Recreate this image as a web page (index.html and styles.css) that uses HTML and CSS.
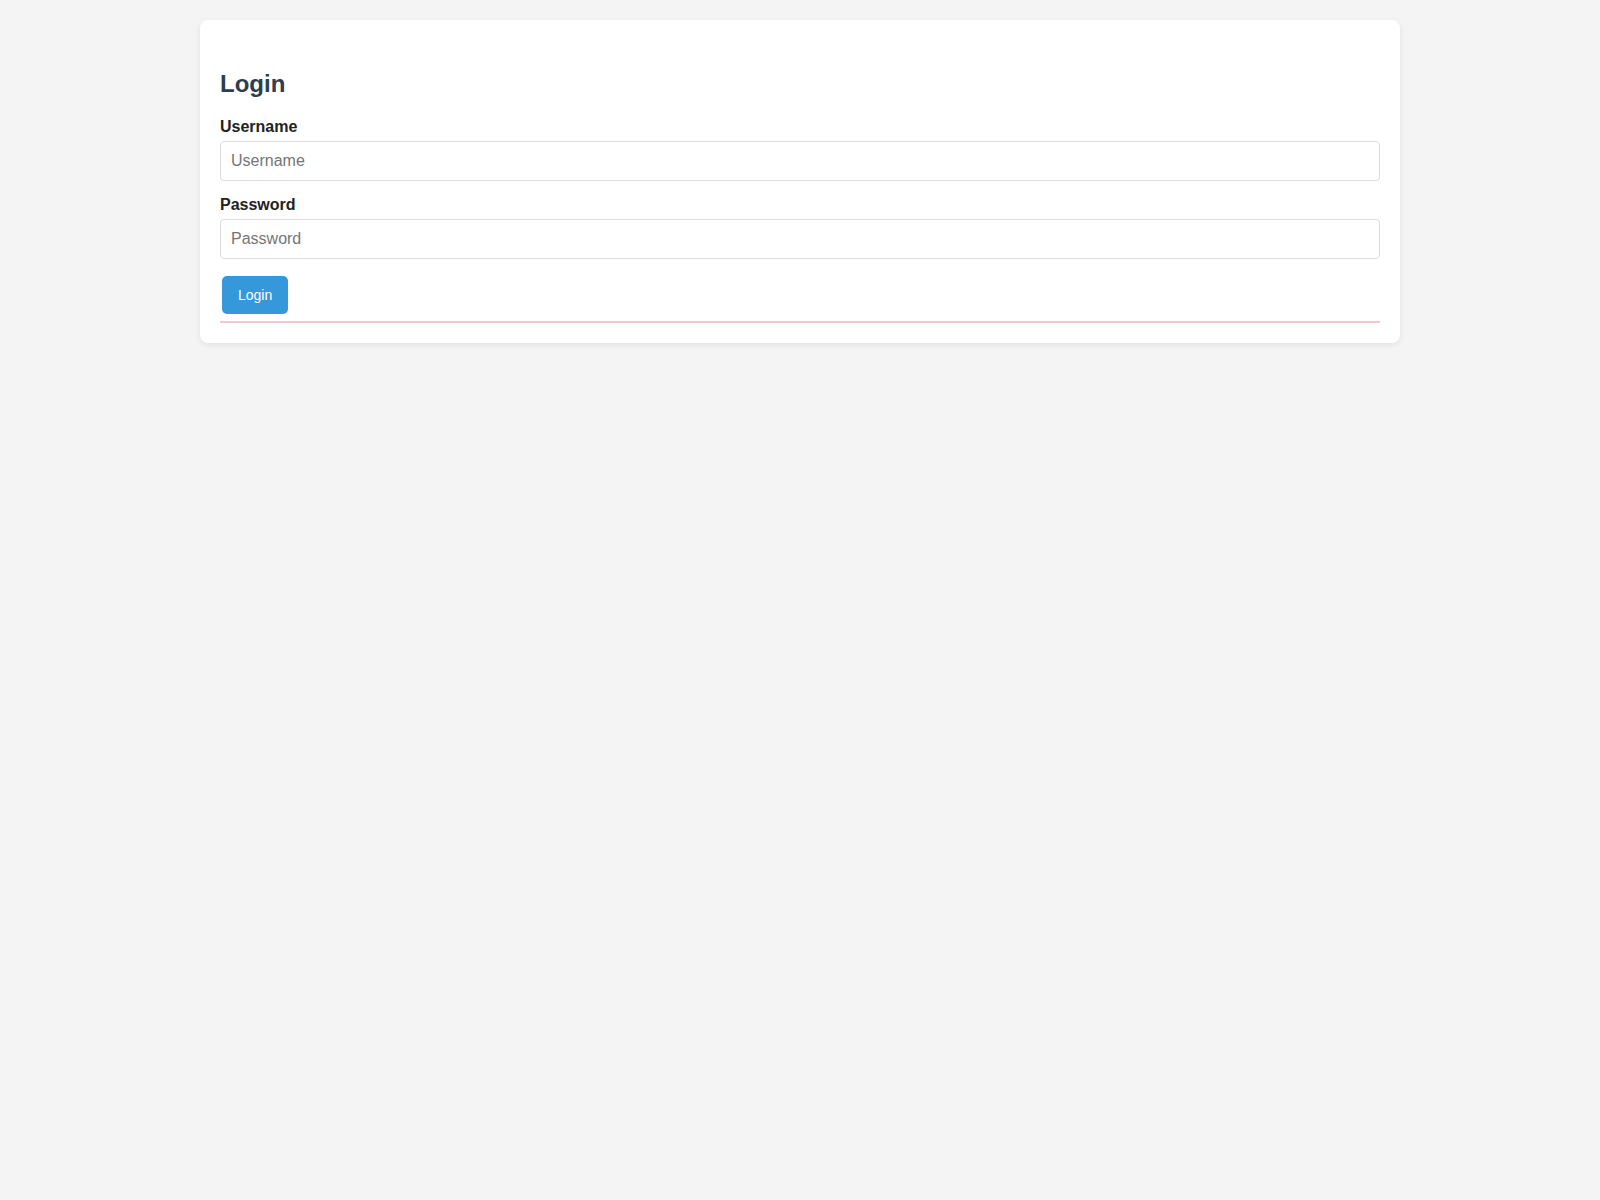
FILE: index.html
```html
<!DOCTYPE html>
<html lang="en">
<head>
<meta charset="utf-8">
<title>Login</title>
<link rel="stylesheet" href="styles.css">
</head>
<body>
<div class="container">
  <h2 class="title">Login</h2>
  <form class="form">
    <div class="group">
      <label class="label" for="username">Username</label>
      <input class="input" id="username" type="text" placeholder="Username">
    </div>
    <div class="group">
      <label class="label" for="password">Password</label>
      <input class="input" id="password" type="password" placeholder="Password">
    </div>
    <button class="btn" type="button">Login</button>
    <div class="error"></div>
  </form>
</div>
</body>
</html>
```
FILE: styles.css
```css
* { box-sizing: border-box; }
body {
  margin: 0;
  padding: 20px 0;
  background: #f4f4f4;
  font-family: "Liberation Sans", Arial, sans-serif;
  color: #333;
}
.container {
  max-width: 1200px;
  margin: 0 auto;
  background: #fff;
  border-radius: 8px;
  box-shadow: 0 2px 6px rgba(0,0,0,0.08);
  padding: 30px 20px 20px;
}
.title {
  font-size: 24px;
  font-weight: bold;
  color: #2c3e50;
  margin: 20px 0 21px;
  line-height: 27px;
}
.form { margin: 0; }
.group {
  display: flex;
  flex-direction: column;
  margin-bottom: 15px;
}
.label {
  font-size: 16px;
  font-weight: bold;
  color: #222;
  line-height: 18px;
  margin-bottom: 5px;
}
.input {
  height: 40px;
  padding: 10px;
  border: 1px solid #ddd;
  border-radius: 4px;
  font-family: "Liberation Sans", Arial, sans-serif;
  font-size: 16px;
  color: #333;
  width: 100%;
}
.input::placeholder { color: #757575; }
.btn {
  display: block;
  margin: 17px 2px 0;
  height: 38px;
  padding: 0 16px;
  border: none;
  border-radius: 5px;
  background: #3498db;
  color: #fff;
  font-family: "Liberation Sans", Arial, sans-serif;
  font-size: 14px;
  cursor: pointer;
}
.error {
  margin-top: 7px;
  border-top: 1px solid #f5c6cb;
  border-bottom: 1px solid #f5c6cb;
}
```
